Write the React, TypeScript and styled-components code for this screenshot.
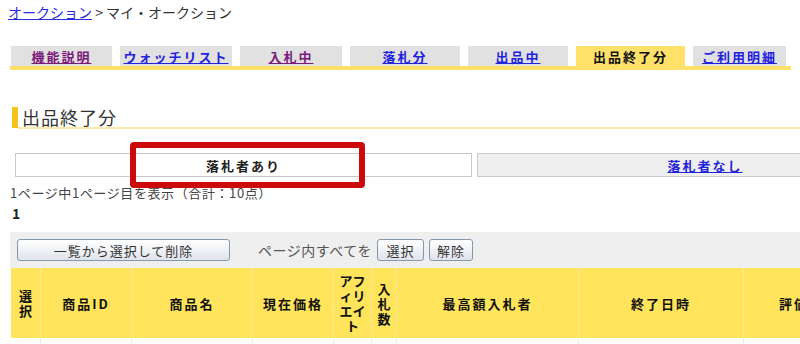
import React from "react";
import styled, { createGlobalStyle } from "styled-components";

const GlobalStyle = createGlobalStyle`
  html, body { margin: 0; padding: 0; background: #fff; overflow: hidden; }
  body { font-family: "Noto Sans CJK JP", "Noto Sans", sans-serif; color: #222; }
`;

const Page = styled.div`
  position: relative;
  width: 960px;
  padding-left: 10px;
`;

const Breadcrumb = styled.div`
  padding-top: 2px;
  margin-left: -2px;
  font-size: 14px;
  line-height: 20px;
  color: #333;
  a { color: #2a2ae0; text-decoration: underline; }
`;

const TabBar = styled.div`
  display: flex;
  gap: 8px;
  margin-top: 24px;
  width: 780px;
  padding-left: 1px;
  border-bottom: 4px solid #ffe16a;
`;

const Tab = styled.a<{ $w: number; $active?: boolean; $visited?: boolean }>`
  display: flex;
  align-items: center;
  justify-content: center;
  width: ${(p) => p.$w}px;
  height: 20px;
  font-size: 13px;
  font-weight: bold;
  letter-spacing: 2px;
  background: ${(p) => (p.$active ? "#ffe16a" : "#e1e1e1")};
  color: ${(p) => (p.$active ? "#111" : p.$visited ? "#7a1a7a" : "#2323dd")};
  text-decoration: ${(p) => (p.$active ? "none" : "underline")};
`;

const Heading = styled.div`
  display: flex;
  margin-top: 37px;
  padding-left: 2px;
`;

const HeadBar = styled.div`
  width: 6px;
  height: 21px;
  background: #f6c21c;
`;

const HeadTitle = styled.h2`
  flex: 1;
  margin: 0;
  padding-left: 4px;
  font-size: 18px;
  font-weight: normal;
  line-height: 20px;
  letter-spacing: 1px;
  color: #333;
  border-bottom: 2px solid #ffe9a6;
`;

const SubTabs = styled.div`
  display: flex;
  gap: 5px;
  margin-top: 24px;
  padding-left: 5px;
`;

const SubTab = styled.div<{ $w: number; $active?: boolean }>`
  display: flex;
  align-items: center;
  justify-content: center;
  box-sizing: border-box;
  width: ${(p) => p.$w}px;
  height: 24px;
  border: 1px solid #c9c9c9;
  background: ${(p) => (p.$active ? "#fff" : "#efefef")};
  font-size: 13px;
  font-weight: bold;
  letter-spacing: 2px;
  color: #222;
  a { color: #2323dd; text-decoration: underline; }
`;

const Highlight = styled.div`
  position: absolute;
  left: 130px;
  top: 142px;
  width: 235px;
  height: 46px;
  box-sizing: border-box;
  border: 6px solid #cc0a0a;
  border-radius: 4px;
`;

const PageInfo = styled.div`
  margin-top: 8px;
  font-size: 13px;
  letter-spacing: 0.6px;
  line-height: 16px;
  color: #444;
`;

const PageNum = styled.div`
  margin-top: 4px;
  padding-left: 2px;
  font-size: 14px;
  font-weight: bold;
  line-height: 16px;
  color: #222;
`;

const Toolbar = styled.div`
  display: flex;
  align-items: center;
  gap: 5px;
  margin-top: 11px;
  height: 36px;
  padding-left: 7px;
  background: #efefef;
`;

const Button = styled.button<{ $w: number }>`
  width: ${(p) => p.$w}px;
  height: 22px;
  padding: 0;
  border: 1px solid #8797ad;
  border-radius: 3px;
  background: linear-gradient(#ffffff, #dfe4eb);
  font-family: inherit;
  font-size: 13px;
  letter-spacing: 1px;
  color: #333;
`;

const ToolLabel = styled.span`
  margin-left: 23px;
  font-size: 14px;
  letter-spacing: 0.5px;
  color: #555;
`;

const Table = styled.table`
  border-collapse: collapse;
  margin-left: 1px;
  table-layout: fixed;
`;

const Th = styled.th<{ $w: number }>`
  width: ${(p) => p.$w}px;
  height: 70px;
  padding: 0;
  background: #ffe45c;
  border-right: 1px solid #f8e9a0;
  font-size: 13px;
  font-weight: bold;
  letter-spacing: 2px;
  line-height: 15px;
  color: #111;
  text-align: center;
  vertical-align: middle;
`;

const NarrowTh = styled(Th)`
  letter-spacing: 0;
  line-height: 15px;
`;

const Td = styled.td`
  padding: 4px 4px;
  vertical-align: top;
  font-size: 13px;
  border-right: 1px solid #eee;
  a { color: #2323dd; text-decoration: underline; }
`;

export default function App() {
  return (
    <Page>
      <GlobalStyle />
      <Breadcrumb>
        <a>オークション</a> &gt; マイ・オークション
      </Breadcrumb>
      <TabBar>
        <Tab $w={101} $visited>機能説明</Tab>
        <Tab $w={112}>ウォッチリスト</Tab>
        <Tab $w={102} $visited>入札中</Tab>
        <Tab $w={110}>落札分</Tab>
        <Tab $w={100}>出品中</Tab>
        <Tab $w={109} $active>出品終了分</Tab>
        <Tab $w={93}>ご利用明細</Tab>
      </TabBar>
      <Heading>
        <HeadBar />
        <HeadTitle>出品終了分</HeadTitle>
      </Heading>
      <SubTabs>
        <SubTab $w={457} $active>落札者あり</SubTab>
        <SubTab $w={456}>
          <a>落札者なし</a>
        </SubTab>
      </SubTabs>
      <Highlight />
      <PageInfo>1ページ中1ページ目を表示（合計：10点）</PageInfo>
      <PageNum>1</PageNum>
      <Toolbar>
        <Button $w={213}>一覧から選択して削除</Button>
        <ToolLabel>ページ内すべてを</ToolLabel>
        <Button $w={47}>選択</Button>
        <Button $w={44}>解除</Button>
      </Toolbar>
      <Table>
        <thead>
          <tr>
            <NarrowTh $w={29}>選<br />択</NarrowTh>
            <Th $w={90}>商品ID</Th>
            <Th $w={120}>商品名</Th>
            <Th $w={80}>現在価格</Th>
            <NarrowTh $w={37}>アフ<br />ィリ<br />エイ<br />ト</NarrowTh>
            <NarrowTh $w={24}>入<br />札<br />数</NarrowTh>
            <Th $w={181}>最高額入札者</Th>
            <Th $w={164}>終了日時</Th>
            <Th $w={100}>評価</Th>
          </tr>
        </thead>
        <tbody>
          <tr>
            <Td />
            <Td />
            <Td><a>ｘｘｘｘｘｘ</a></Td>
            <Td />
            <Td />
            <Td />
            <Td />
            <Td />
            <Td />
          </tr>
        </tbody>
      </Table>
    </Page>
  );
}
